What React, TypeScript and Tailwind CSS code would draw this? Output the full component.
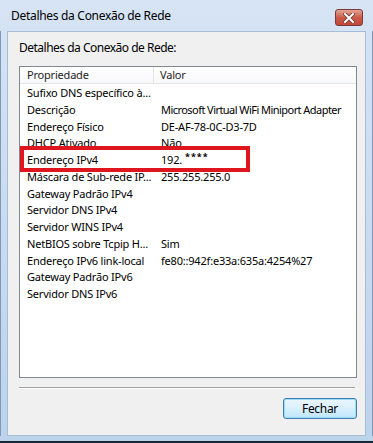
import React from "react";

const rows: [string, string][] = [
  ["Sufixo DNS específico à...", ""],
  ["Descrição", "Microsoft Virtual WiFi Miniport Adapter"],
  ["Endereço Físico", "DE-AF-78-0C-D3-7D"],
  ["DHCP Ativado", "Não"],
  ["Endereço IPv4", "192."],
  ["Máscara de Sub-rede IP...", "255.255.255.0"],
  ["Gateway Padrão IPv4", ""],
  ["Servidor DNS IPv4", ""],
  ["Servidor WINS IPv4", ""],
  ["NetBIOS sobre Tcpip H...", "Sim"],
  ["Endereço IPv6 link-local", "fe80::942f:e33a:635a:4254%27"],
  ["Gateway Padrão IPv6", ""],
  ["Servidor DNS IPv6", ""],
];

export default function App() {
  return (
    <div
      className="relative w-[373px] h-[443px] overflow-hidden flex flex-col text-black bg-gradient-to-b from-[#d6e4f4] to-[#bcd3ec]"
      style={{ fontFamily: '"Noto Sans", "Open Sans", Arial, sans-serif' }}
    >
      {/* title bar */}
      <div className="h-[31px] flex items-start shrink-0">
        <div className="pl-[11px] pt-[8px] text-[12px] leading-[16px] tracking-[-0.3px]">
          Detalhes da Conexão de Rede
        </div>
        <div className="ml-auto mr-[10px] mt-[9px] w-[28px] h-[17px] rounded-[3px] border border-[#7a3a3a] bg-gradient-to-b from-[#e3a495] via-[#cc5a48] to-[#c0473a] flex items-center justify-center">
          <svg width="12" height="10" viewBox="0 0 12 10">
            <path d="M2 1 L10 9 M10 1 L2 9" stroke="#6a3a3a" strokeWidth="3.6" strokeLinecap="square" />
            <path d="M2 1 L10 9 M10 1 L2 9" stroke="#ffffff" strokeWidth="2" strokeLinecap="square" />
          </svg>
        </div>
      </div>
      {/* body */}
      <div className="flex h-[405px] shrink-0">
        <div className="w-[7px] shrink-0 border-l border-[#7d98b8]" />
        <div className="flex-1 bg-[#f0f0f0] flex flex-col pl-[11px] pr-[8px] border border-[#a7bdd6]">
          <div className="mt-[8px] h-[16px] text-[12px] leading-[16px] tracking-[-0.5px]">
            Detalhes da Conexão de Rede:
          </div>
          <div className="mt-[10px] h-[312px] bg-white border border-[#828790] flex flex-col text-[11px] tracking-[-0.2px]">
            <div className="h-[17px] flex border-b border-[#e5e5e5] leading-[16px] text-[#1e1e1e] bg-gradient-to-b from-white to-[#f7f8fa]">
              <div className="w-[134px] pl-[7px] border-r border-[#e5e5e5]">Propriedade</div>
              <div className="pl-[6px]">Valor</div>
            </div>
            <div className="pt-[1px]">
              {rows.map(([k, v]) => (
                <div key={k} className="h-[16.75px] flex leading-[16px] whitespace-nowrap">
                  <div className="w-[134px] shrink-0 pl-[7px] overflow-hidden">{k}</div>
                  <div className={k === "Descrição" ? "pl-[7px] tracking-[-0.55px]" : "pl-[7px]"}>
                    {v}
                    {k === "Endereço IPv4" && (
                      <span className="ml-[3px] align-[4px] text-[9px] leading-[9px] font-bold tracking-[1px]">****</span>
                    )}
                  </div>
                </div>
              ))}
            </div>
          </div>
          <div className="mt-[9px] mr-[2px] h-[2px] border-t border-[#a0a0a0] border-b border-b-white" />
          <div className="mt-[9px] flex justify-end">
            <button className="w-[74px] shrink-0 h-[21px] rounded-[3px] border border-[#3c7fb1] bg-gradient-to-b from-[#eaf6fd] via-[#d9f0fc] to-[#bee6fd] text-[12px] leading-[18px] tracking-[-0.3px] shadow-[inset_0_0_0_1px_#9ddaf8]">
              Fechar
            </button>
          </div>
        </div>
        <div className="w-[7px] shrink-0 border-r border-[#7d98b8]" />
      </div>
      <div className="h-[5px] shrink-0" />
      <div className="h-[2px] shrink-0 bg-[#1a2633]" />
      {/* highlight */}
      <div className="absolute left-[20px] top-[146px] w-[230px] h-[26px] border-[4px] border-[#e0161f]" />
    </div>
  );
}
